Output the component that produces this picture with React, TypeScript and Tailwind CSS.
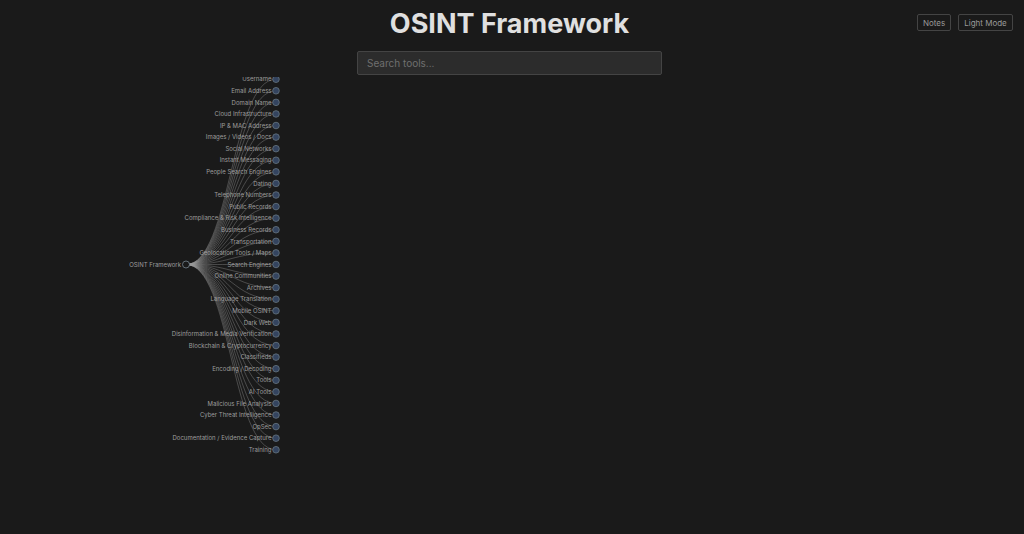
const categories = [
  "Username",
  "Email Address",
  "Domain Name",
  "Cloud Infrastructure",
  "IP & MAC Address",
  "Images / Videos / Docs",
  "Social Networks",
  "Instant Messaging",
  "People Search Engines",
  "Dating",
  "Telephone Numbers",
  "Public Records",
  "Compliance & Risk Intelligence",
  "Business Records",
  "Transportation",
  "Geolocation Tools / Maps",
  "Search Engines",
  "Online Communities",
  "Archives",
  "Language Translation",
  "Mobile OSINT",
  "Dark Web",
  "Disinformation & Media Verification",
  "Blockchain & Cryptocurrency",
  "Classifieds",
  "Encoding / Decoding",
  "Tools",
  "AI Tools",
  "Malicious File Analysis",
  "Cyber Threat Intelligence",
  "OpSec",
  "Documentation / Evidence Capture",
  "Training"
];

// svg starts at y=77 on the page, so the first node gets cut off at the top
const ROOT_X = 186;
const ROOT_Y = 187.5;
const CHILD_X = 276;
const FIRST_Y = 2.2;
const STEP = 11.58;

function Tree() {
  return (
    <svg
      width={1019}
      height={457}
      className="block font-['Inter',sans-serif]"
    >
      {categories.map((name, i) => {
        const y = FIRST_Y + i * STEP;
        const mid = (ROOT_X + CHILD_X) / 2;
        return (
          <path
            key={name}
            d={`M${ROOT_X},${ROOT_Y}C${mid},${ROOT_Y} ${mid},${y} ${CHILD_X},${y}`}
            fill="none"
            stroke="#9a9a9a"
            strokeWidth={0.7}
            strokeOpacity={0.55}
          />
        );
      })}
      <circle
        cx={ROOT_X}
        cy={ROOT_Y}
        r={3.5}
        fill="#1a1a1a"
        stroke="#76858f"
        strokeWidth={0.8}
      />
      <g opacity={0.95} fill="#a3a3a3" fontSize={6} textAnchor="end">
        <text x={ROOT_X - 5} y={ROOT_Y + 2.2}>
          OSINT Framework
        </text>
        {categories.map((name, i) => (
          <text key={name} x={CHILD_X - 4.5} y={FIRST_Y + i * STEP + 2.2}>
            {name}
          </text>
        ))}
      </g>
      {categories.map((name, i) => (
        <circle
          key={name}
          cx={CHILD_X}
          cy={FIRST_Y + i * STEP}
          r={3.3}
          fill="#34445f"
          stroke="#66757f"
          strokeWidth={0.8}
        />
      ))}
    </svg>
  );
}

export default function App() {
  return (
    <div className="h-[534px] w-[1024px] overflow-hidden bg-[#1a1a1a] font-['Inter',sans-serif]">
      <div className="w-[1019px]">
        <header className="grid grid-cols-[1fr_auto_1fr] items-start pt-[5px]">
          <div />
          <h1 className="text-[27px] leading-[38px] font-bold text-[#e0e0e0]">
            OSINT Framework
          </h1>
          <div className="flex justify-end gap-[7px] pt-[9px] pr-[6px]">
            <button className="h-[17px] w-[34px] rounded-[2px] border border-[#444] text-[8px] text-[#999]">
              Notes
            </button>
            <button className="h-[17px] w-[55px] rounded-[2px] border border-[#444] text-[8px] text-[#999]">
              Light Mode
            </button>
          </div>
        </header>
        <div className="mt-[8px] flex justify-center">
          <input
            placeholder="Search tools..."
            className="h-[24px] w-[305px] rounded-[2px] border border-[#444] bg-[#2c2c2c] px-[9px] text-[10px] text-[#ddd] outline-none placeholder:text-[#6f6f6f]"
          />
        </div>
        <div className="mt-[2px]">
          <Tree />
        </div>
      </div>
    </div>
  );
}
